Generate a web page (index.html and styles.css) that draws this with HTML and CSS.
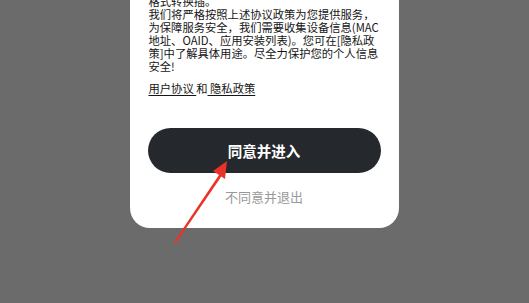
FILE: index.html
```html
<!DOCTYPE html>
<html>
<head>
    <title>隐私政策</title>
    <link rel="stylesheet" href="styles.css">
</head>
<body>
    <div class="dialog">
        <div class="policy-text">
            <p>格式转换插。<br>我们将严格按照上述协议政策为您提供服务，为保障服务安全，我们需要收集设备信息(MAC地址、OAID、应用安装列表)。您可在[隐私政策]中了解具体用途。尽全力保护您的个人信息安全!</p>
            <p class="links"><a>用户协议 </a>和<a> 隐私政策</a></p>
        </div>
        <button class="btn-agree">同意并进入</button>
        <div class="btn-exit">不同意并退出</div>
    </div>

    <svg class="arrow" width="529" height="303" viewBox="0 0 529 303">
        <path d="M174 242 L221 172 L223 174 L176 243 Z" fill="#e8332b"/>
        <path d="M227 161 L213 171 L225 179 Z" fill="#e8332b"/>
    </svg>
</body>
</html>
```

FILE: styles.css
```css
body {
    font-family: "Noto Sans CJK SC", "Noto Sans", sans-serif;
    background: #6b6b6b;
    margin: 0;
    height: 303px;
    overflow: hidden;
    display: flex;
    justify-content: center;
    align-items: flex-start;
}

.dialog {
    background: white;
    width: 269px;
    margin-left: -1px;
    margin-top: -5px;
    border-radius: 0 0 20px 20px;
    padding: 0 18px 22px;
    box-sizing: border-box;
    display: flex;
    flex-direction: column;
}

.policy-text {
    padding: 0 1px;
    color: #151515;
    font-size: 11.3px;
    line-height: 13px;
}

.policy-text p {
    margin: 0;
}

.policy-text .links {
    margin-top: 9px;
}

.links a {
    text-decoration: underline;
    text-underline-offset: 2px;
}

.btn-agree {
    margin-top: 33px;
    height: 45px;
    border: none;
    border-radius: 23px;
    background: #25282d;
    color: white;
    font-family: inherit;
    font-size: 14.5px;
    font-weight: bold;
    cursor: pointer;
}

.btn-exit {
    margin-top: 14px;
    text-align: center;
    color: #999;
    font-size: 13px;
}

.arrow {
    position: absolute;
    left: 0;
    top: 0;
    pointer-events: none;
}
```
